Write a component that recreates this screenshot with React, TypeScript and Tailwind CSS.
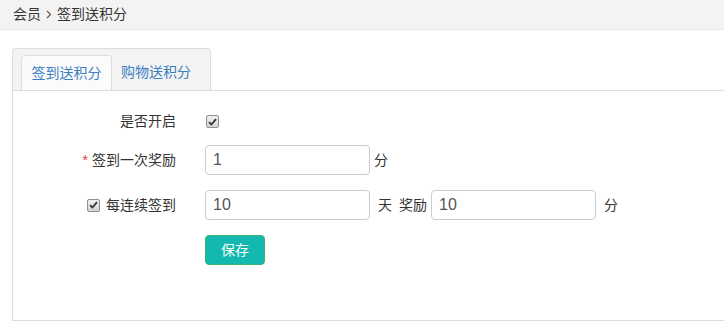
import React from 'react';

const font = "font-['Liberation_Sans','Noto_Sans_CJK_SC',sans-serif]";

function Check() {
  return (
    <span className="inline-flex items-center justify-center w-[13px] h-[13px] rounded-[2px] border border-[#8f8f8f] bg-[linear-gradient(#f0f0f0,#d4d4d4)]">
      <svg width="9" height="8" viewBox="0 0 9 8">
        <path d="M1 4.2 L3.4 6.5 L8 1.2" fill="none" stroke="#333" strokeWidth="1.8" />
      </svg>
    </span>
  );
}

function Field({ value }: { value: string }) {
  return (
    <input
      defaultValue={value}
      className="w-[165px] h-[30px] border border-[#ccc] rounded-[4px] px-[7px] text-[16px] text-[#555] outline-none"
    />
  );
}

export default function App() {
  return (
    <div className={`w-[724px] h-[332px] bg-white overflow-hidden text-[14px] text-[#333] ${font}`}>
      {/* 面包屑 */}
      <div className="h-[30px] bg-[#f3f3f3] border-b border-[#e8e8e8] flex items-center pl-[13px] gap-[5px]">
        <span>会员</span>
        <svg width="6" height="9" viewBox="0 0 6 9">
          <path d="M1 1 L4.5 4.5 L1 8" fill="none" stroke="#555" strokeWidth="1.1" />
        </svg>
        <span>签到送积分</span>
      </div>

      <div className="pt-[18px] pl-[12px]">
        {/* 标签页 */}
        <div className="w-[199px] h-[42px] bg-[#f3f3f3] border border-[#ddd] border-b-0 rounded-t-[4px] flex items-end pl-[8px]">
          <div className="w-[91px] h-[35px] bg-[#fcfbfb] border border-[#ddd] border-b-0 rounded-t-[4px] flex items-center justify-center text-[#3a7fc0]">
            签到送积分
          </div>
          <div className="h-[35px] flex items-center pl-[9px] text-[#3a7fc0]">购物送积分</div>
        </div>

        {/* 内容面板 */}
        <div className="h-[231px] border border-[#ddd] border-r-0 pt-[15px]">
          <div className="h-[30px] flex items-center">
            <div className="w-[163px] text-right">是否开启</div>
            <div className="ml-[30px]"><Check /></div>
          </div>

          <div className="mt-[9px] h-[30px] flex items-center">
            <div className="w-[163px] flex justify-end items-center">
              <span className="text-[#e4393c] mr-[4px]">*</span>
              <span>签到一次奖励</span>
            </div>
            <div className="ml-[29px] flex items-center">
              <Field value="1" />
              <span className="ml-[4px]">分</span>
            </div>
          </div>

          <div className="mt-[15px] h-[30px] flex items-center">
            <div className="w-[163px] flex justify-end items-center gap-[6px]">
              <Check />
              <span>每连续签到</span>
            </div>
            <div className="ml-[29px] flex items-center">
              <Field value="10" />
              <span className="ml-[8px]">天</span>
              <span className="ml-[7px] mr-[4px]">奖励</span>
              <Field value="10" />
              <span className="ml-[8px]">分</span>
            </div>
          </div>

          <div className="mt-[15px] pl-[192px]">
            <button className="w-[60px] h-[30px] rounded-[4px] bg-[#13b9ae] border border-[#3cb371] text-white text-[14px]">
              保存
            </button>
          </div>
        </div>
      </div>
    </div>
  );
}
